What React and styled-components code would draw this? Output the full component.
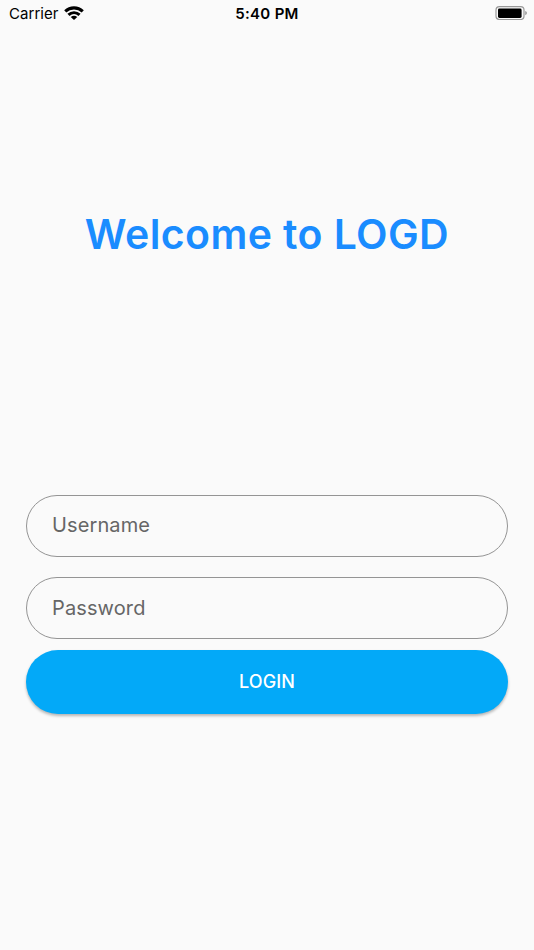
import React, { useState } from 'react'
import styled, { createGlobalStyle } from 'styled-components'

const GlobalStyle = createGlobalStyle`
    * {
        box-sizing: border-box;
    }

    body {
        margin: 0;
        background-color: #fafafa;
        font-family: Inter, "Liberation Sans", sans-serif;
    }
`

const Screen = styled.div`
    display: flex;
    flex-direction: column;
    height: 950px;
    overflow: hidden;
`

const StatusBar = styled.header`
    display: grid;
    grid-template-columns: 1fr auto 1fr;
    align-items: center;
    height: 26px;
    padding: 0 7px 0 9px;
    color: #000000;
`

const Carrier = styled.div`
    display: flex;
    align-items: center;
    gap: 5px;
    font-size: 15px;
    letter-spacing: 0.05px;
`

const Clock = styled.div`
    padding-right: 2px;
    font-size: 15px;
    font-weight: 600;
    letter-spacing: 0.3px;
`

const Battery = styled.div`
    display: flex;
    justify-content: flex-end;
`

const Title = styled.h1`
    margin: 183px 0 0;
    height: 50px;
    line-height: 50px;
    text-align: center;
    font-size: 41px;
    font-weight: 580;
    letter-spacing: 0.4px;
    color: #1a8cff;
`

const LoginForm = styled.form`
    display: flex;
    flex-direction: column;
    margin: 236px 26px 0;
`

const Field = styled.input`
    height: 62px;
    margin-bottom: ${(props) => props.$gap}px;
    padding: 0 25px ${(props) => props.$lift || 0}px;
    border: 1px solid #949494;
    border-radius: 31px;
    outline: none;
    background: none;
    font-family: inherit;
    font-size: 20px;
    letter-spacing: 0.12px;

    &::placeholder {
        color: #666666;
        opacity: 1;
    }
`

const LoginButton = styled.button`
    height: 64px;
    padding: 0 0 2px;
    border: none;
    border-radius: 32px;
    background-color: #03a9f8;
    box-shadow: 0 2px 3px rgba(0, 0, 0, 0.28);
    color: #ffffff;
    font-family: inherit;
    font-size: 18px;
    font-weight: 500;
    letter-spacing: 0.1px;

    &:hover {
        cursor: pointer;
    }
`

function WifiIcon() {
    return (
        <svg width="20" height="14" viewBox="0 0 20 14">
            <path d="M0.2 4.2A14.3 14.3 0 0 1 19.8 4.2L17.7 6.5A11.5 11.5 0 0 0 2.3 6.5Z" />
            <path d="M3.4 7.7A9.8 9.8 0 0 1 16.6 7.7L14.5 9.9A7.1 7.1 0 0 0 5.5 9.9Z" />
            <path d="M6.7 11A5.2 5.2 0 0 1 13.3 11L10 14Z" />
        </svg>
    )
}

function BatteryIcon() {
    return (
        <svg width="32" height="14" viewBox="0 0 32 14">
            <rect x="1" y="0.6" width="28" height="12.9" rx="3.4" fill="none" stroke="#999999" strokeWidth="1.2" />
            <rect x="3" y="2.5" width="23.6" height="9.4" rx="1.4" />
            <path d="M30.3 5Q31.8 5.6 31.8 7.1T30.3 9.2Z" fill="#888888" />
        </svg>
    )
}

export default function App() {
    const [username, setUsername] = useState('')
    const [password, setPassword] = useState('')

    return (
        <Screen>
            <GlobalStyle />
            <StatusBar>
                <Carrier>Carrier <WifiIcon /></Carrier>
                <Clock>5:40 PM</Clock>
                <Battery><BatteryIcon /></Battery>
            </StatusBar>
            <Title>Welcome to LOGD</Title>
            <LoginForm onSubmit={(e) => e.preventDefault()}>
                <Field
                    $gap={20}
                    $lift={2}
                    placeholder="Username"
                    value={username}
                    onChange={(e) => setUsername(e.target.value)}
                />
                <Field
                    $gap={11}
                    type="password"
                    placeholder="Password"
                    value={password}
                    onChange={(e) => setPassword(e.target.value)}
                />
                <LoginButton type="submit">LOGIN</LoginButton>
            </LoginForm>
        </Screen>
    )
}
